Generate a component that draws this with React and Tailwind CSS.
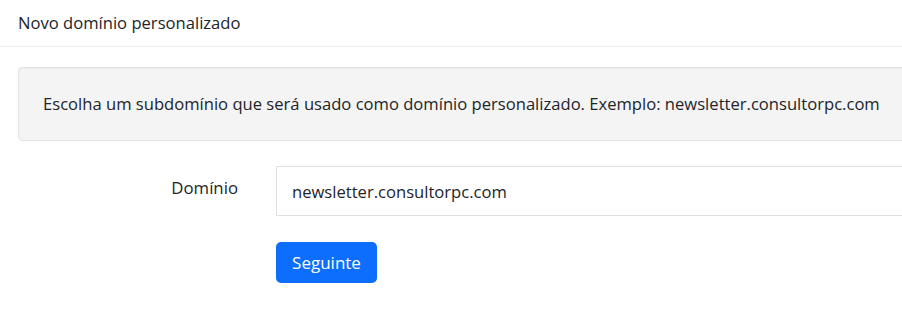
export default function App() {
  return (
    <div
      className="w-[902px] h-[313px] overflow-hidden bg-white text-[#212529]"
      style={{ fontFamily: '"Open Sans", "Liberation Sans", sans-serif' }}
    >
      <div className="w-[1000px]">
        <header className="h-[47px] border-b border-[#e9ecef] flex items-center px-[18px]">
          <h1 className="text-[16.6px] leading-none">Novo domínio personalizado</h1>
        </header>

        <div className="px-[18px] pt-[20px]">
          <div className="h-[74px] bg-[#f4f4f4] border border-[#e3e3e3] rounded flex items-center px-[24px] shadow-[inset_0_1px_2px_rgba(0,0,0,0.04)]">
            <p className="text-[16.6px]">
              Escolha um subdomínio que será usado como domínio personalizado. Exemplo: newsletter.consultorpc.com
            </p>
          </div>

          <form className="mt-[25px]">
            <div className="flex items-start">
              <label className="w-[220px] text-right pt-[9px] text-[16.8px]">Domínio</label>
              <div className="ml-[38px] flex-1">
                <input
                  defaultValue="newsletter.consultorpc.com"
                  className="w-full h-[50px] border border-[#dee2e6] px-[15px] text-[16.6px] text-[#212529] outline-none"
                />
              </div>
            </div>
            <div className="flex mt-[26px]">
              <div className="w-[258px]" />
              <button
                type="button"
                className="h-[41px] w-[101px] bg-[#0d6efd] text-white rounded-[5px] text-[17px]"
              >
                Seguinte
              </button>
            </div>
          </form>
        </div>
      </div>
    </div>
  )
}
